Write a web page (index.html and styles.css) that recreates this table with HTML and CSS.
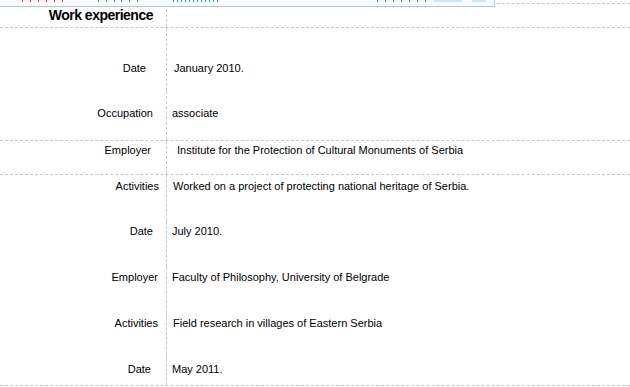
FILE: index.html
```html
<!DOCTYPE html>
<html>
<head>
<meta charset="utf-8">
<link rel="stylesheet" href="styles.css">
</head>
<body>
<div class="toolbar">
  <svg class="ticks" width="494" height="6" viewBox="0 0 494 6">
    <g fill="#e8262b">
      <rect x="22" y="0" width="1" height="2"/><rect x="30" y="0" width="1" height="2"/><rect x="38" y="0" width="1" height="2"/>
      <rect x="46" y="0" width="1" height="2"/><rect x="54" y="0" width="1" height="2"/><rect x="62" y="0" width="1" height="2"/>
    </g>
    <g fill="#1e90e6">
      <rect x="98" y="0" width="1" height="2"/><rect x="106" y="0" width="1" height="2"/><rect x="114" y="0" width="1" height="2"/>
      <rect x="121" y="0" width="1" height="2"/><rect x="129" y="0" width="1" height="2"/><rect x="137" y="0" width="1" height="2"/>
      <rect x="173" y="0" width="1" height="2"/><rect x="177" y="0" width="1" height="2"/><rect x="181" y="0" width="1" height="2"/>
      <rect x="185" y="0" width="1" height="2"/><rect x="189" y="0" width="1" height="2"/><rect x="193" y="0" width="1" height="2"/>
      <rect x="197" y="0" width="1" height="2"/><rect x="201" y="0" width="1" height="2"/><rect x="205" y="0" width="1" height="2"/>
      <rect x="209" y="0" width="1" height="2"/><rect x="213" y="0" width="1" height="2"/><rect x="217" y="0" width="1" height="2"/>
      <rect x="377" y="0" width="1" height="2"/><rect x="385" y="0" width="1" height="2"/><rect x="393" y="0" width="1" height="2"/>
      <rect x="401" y="0" width="1" height="2"/><rect x="409" y="0" width="1" height="2"/><rect x="417" y="0" width="1" height="2"/>
      <rect x="425" y="0" width="1" height="2"/>
    </g>
    <g fill="#cde5f8">
      <rect x="434" y="0" width="28" height="2"/><rect x="472" y="0" width="14" height="2"/>
    </g>
  </svg>
</div>

<div class="sheet">
  <div class="row head">
    <div class="label pr-13">Work experience</div>
    <div class="value"></div>
  </div>

  <div class="row r-date1 open">
    <div class="label pr-20">Date</div>
    <div class="value pl-7">January 2010.</div>
  </div>
  <div class="row r-occ">
    <div class="label pr-13">Occupation</div>
    <div class="value pl-5">associate</div>
  </div>

  <div class="row r-emp1">
    <div class="label pr-15">Employer</div>
    <div class="value pl-10">Institute for the Protection of Cultural Monuments of Serbia</div>
  </div>

  <div class="row r-act1 open">
    <div class="label pr-7">Activities</div>
    <div class="value pl-6">Worked on a project of protecting national heritage of Serbia.</div>
  </div>
  <div class="row r-mid open">
    <div class="label pr-13">Date</div>
    <div class="value pl-5">July 2010.</div>
  </div>
  <div class="row r-mid open">
    <div class="label pr-8">Employer</div>
    <div class="value pl-5">Faculty of Philosophy, University of Belgrade</div>
  </div>
  <div class="row r-mid open">
    <div class="label pr-8">Activities</div>
    <div class="value pl-6">Field research in villages of Eastern Serbia</div>
  </div>
  <div class="row r-last">
    <div class="label pr-15">Date</div>
    <div class="value pl-5">May 2011.</div>
  </div>
</div>
</body>
</html>
```

FILE: styles.css
```css
html, body {
  margin: 0;
  padding: 0;
  background: #ffffff;
}

body {
  width: 630px;
  height: 387px;
  overflow: hidden;
  font-family: "Liberation Sans", Arial, sans-serif;
  font-size: 11px;
  line-height: 14px;
  color: #000000;
  position: relative;
}

.toolbar {
  position: absolute;
  top: 0;
  left: 0;
  width: 494px;
  height: 6px;
  background: #f8fafc;
  border-right: 1px solid #b9c6cf;
  border-bottom: 1px solid #b9c6cf;
  z-index: 2;
}

.ticks {
  display: block;
}

.sheet {
  margin-top: 3px;
  display: flex;
  flex-direction: column;
}

.row {
  display: grid;
  grid-template-columns: 167px 1fr;
  border-bottom: 1px dashed #c6c6c6;
  box-sizing: border-box;
}

.row.open {
  border-bottom: 0;
}

.label {
  box-sizing: border-box;
  border-right: 1px dashed #c6c6c6;
  text-align: right;
  white-space: nowrap;
}

.value {
  white-space: nowrap;
}

.head {
  border-top: 1px dashed #c6c6c6;
  height: 25px;
}

.head .label {
  font-weight: bold;
  font-size: 14px;
  line-height: 16px;
  letter-spacing: -0.5px;
  padding-top: 3px;
}

.r-date1 { height: 63px; }
.r-date1 > div { padding-top: 33px; }

.r-occ { height: 50px; }
.r-occ > div { padding-top: 15px; }

.r-emp1 { height: 34px; }
.r-emp1 > div { padding-top: 2px; }

.r-act1 { height: 46px; }
.r-act1 > div { padding-top: 4px; }

.r-mid { height: 46px; }
.r-mid > div { padding-top: 3px; }

.r-last { height: 27px; }
.r-last > div { padding-top: 3px; }

.pr-7 { padding-right: 7px; }
.pr-8 { padding-right: 8px; }
.pr-13 { padding-right: 13px; }
.pr-15 { padding-right: 15px; }
.pr-20 { padding-right: 20px; }

.pl-5 { padding-left: 5px; }
.pl-6 { padding-left: 6px; }
.pl-7 { padding-left: 7px; }
.pl-10 { padding-left: 10px; }
```
